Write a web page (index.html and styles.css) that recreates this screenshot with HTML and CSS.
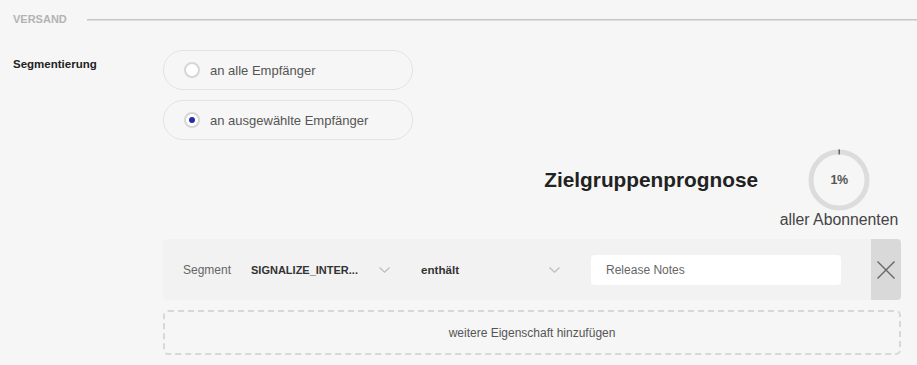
FILE: index.html
```html
<!DOCTYPE html>
<html lang="de">
<head>
<meta charset="utf-8">
<title>Versand</title>
<link rel="stylesheet" href="styles.css">
</head>
<body>
<div class="page">
  <div class="section-head">
    <span class="section-title">VERSAND</span>
    <span class="section-line"></span>
  </div>

  <div class="form-row">
    <div class="form-label">Segmentierung</div>
    <div class="form-content">
      <div class="radio-list">
        <label class="radio-pill">
          <span class="radio"></span>
          <span class="radio-text">an alle Empfänger</span>
        </label>
        <label class="radio-pill">
          <span class="radio radio-checked"></span>
          <span class="radio-text">an ausgewählte Empfänger</span>
        </label>
      </div>

      <div class="forecast">
        <div class="forecast-title">Zielgruppenprognose</div>
        <div class="forecast-stat">
          <div class="ring">
            <svg width="62" height="62" viewBox="0 0 62 62">
              <circle cx="31" cy="31" r="28" fill="none" stroke="#dcdcdc" stroke-width="5"/>
              <circle cx="31" cy="31" r="28" fill="none" stroke="#555" stroke-width="5" stroke-dasharray="1.4 200" transform="rotate(-91 31 31)"/>
            </svg>
            <span class="ring-value">1%</span>
          </div>
          <div class="forecast-caption">aller Abonnenten</div>
        </div>
      </div>

      <div class="segment-row">
        <span class="seg-label">Segment</span>
        <div class="select select-first">
          <span class="select-value">SIGNALIZE_INTER...</span>
          <svg class="chevron" width="11" height="6" viewBox="0 0 11 6"><path d="M0.5 0.5 L5.5 5.2 L10.5 0.5" fill="none" stroke="#bdbdbd" stroke-width="1.2"/></svg>
        </div>
        <div class="select">
          <span class="select-value select-value-op">enthält</span>
          <svg class="chevron" width="11" height="6" viewBox="0 0 11 6"><path d="M0.5 0.5 L5.5 5.2 L10.5 0.5" fill="none" stroke="#bdbdbd" stroke-width="1.2"/></svg>
        </div>
        <div class="text-input">Release Notes</div>
        <button class="remove-btn" type="button" aria-label="entfernen">
          <svg width="18" height="18" viewBox="0 0 18 18"><path d="M0.5 0.5 L17.5 17.5 M17.5 0.5 L0.5 17.5" stroke="#666" stroke-width="1.4" fill="none"/></svg>
        </button>
      </div>

      <div class="add-box">weitere Eigenschaft hinzufügen</div>
    </div>
  </div>
</div>
</body>
</html>
```

FILE: styles.css
```css
* {
  box-sizing: border-box;
}

html, body {
  margin: 0;
  background: #f6f6f6;
}

body {
  font-family: "Liberation Sans", Arial, sans-serif;
  color: #333;
}

.page {
  padding: 12px 17px 0 13px;
}

.section-head {
  display: flex;
  align-items: center;
  gap: 20px;
  height: 14px;
  margin-right: -17px;
}

.section-title {
  font-size: 11px;
  font-weight: bold;
  color: #b3b3b3;
  line-height: 14px;
}

.section-line {
  flex: 1;
  height: 1px;
  background: #c6c6c6;
  box-shadow: 0 1px 0 #dedede;
}

.form-row {
  display: flex;
  margin-top: 24px;
}

.form-label {
  width: 150px;
  flex: none;
  padding-top: 7px;
  font-size: 11.5px;
  font-weight: bold;
  line-height: 14px;
  color: #222;
}

.form-content {
  flex: 1;
  display: flex;
  flex-direction: column;
}

.radio-list {
  display: flex;
  flex-direction: column;
  gap: 10px;
}

.radio-pill {
  width: 250px;
  height: 40px;
  border: 1px solid #e3e3e3;
  border-radius: 20px;
  display: flex;
  align-items: center;
  gap: 10px;
  padding-left: 20px;
}

.radio {
  width: 16px;
  height: 16px;
  border-radius: 50%;
  border: 2px solid #d6d6d6;
  background: #fff;
  display: flex;
  align-items: center;
  justify-content: center;
}

.radio-checked::after {
  content: "";
  width: 6px;
  height: 6px;
  border-radius: 50%;
  background: #2230a8;
}

.radio-text {
  font-size: 13px;
  color: #555;
}

.forecast {
  display: flex;
  justify-content: flex-end;
  align-items: flex-start;
  gap: 19px;
  margin-top: 10px;
}

.forecast-title {
  margin-top: 18px;
  font-size: 20.8px;
  font-weight: bold;
  line-height: 24px;
  color: #222;
}

.forecast-stat {
  width: 124px;
  display: flex;
  flex-direction: column;
  align-items: center;
}

.ring {
  position: relative;
  width: 62px;
  height: 62px;
  margin-top: -1px;
}

.ring svg {
  display: block;
}

.ring-value {
  position: absolute;
  inset: 0;
  display: flex;
  align-items: center;
  justify-content: center;
  font-size: 12.5px;
  font-weight: bold;
  color: #555;
  letter-spacing: -0.5px;
}

.forecast-caption {
  font-size: 15.8px;
  line-height: 18px;
  color: #444;
}

.segment-row {
  margin-top: 10px;
  height: 61px;
  background: #f2f2f2;
  border-radius: 4px;
  display: flex;
  align-items: center;
  padding-left: 20px;
}

.seg-label {
  font-size: 12px;
  color: #666;
  margin-right: 20px;
}

.select {
  width: 150px;
  display: flex;
  align-items: center;
  justify-content: space-between;
  padding-right: 11px;
  margin-right: 20px;
}

.select-value {
  font-size: 11px;
  font-weight: bold;
  color: #333;
}

.select-value-op {
  font-size: 11.6px;
}

.chevron {
  display: block;
}

.text-input {
  width: 250px;
  height: 30px;
  background: #fff;
  border-radius: 4px;
  padding-left: 15px;
  display: flex;
  align-items: center;
  font-size: 12px;
  color: #666;
  margin-right: 30px;
}

.remove-btn {
  align-self: stretch;
  width: 30px;
  border: 0;
  padding: 0;
  background: #d9d9d9;
  border-radius: 0 4px 4px 0;
  display: flex;
  align-items: center;
  justify-content: center;
}

.remove-btn svg {
  display: block;
}

.add-box {
  margin-top: 10px;
  height: 45px;
  border: 2px dashed #d8d8d8;
  border-radius: 5px;
  display: flex;
  align-items: center;
  justify-content: center;
  font-size: 12px;
  color: #555;
}
```
